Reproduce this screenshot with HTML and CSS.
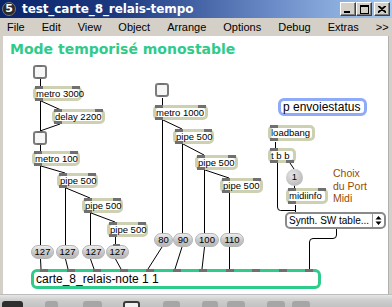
FILE: index.html
```html
<!DOCTYPE html>
<html>
<head>
<meta charset="utf-8">
<link rel="stylesheet" href="styles.css">
</head>
<body>
<div class="window">
  <div class="titlebar">
    <div class="appicon">5</div>
    <div class="title">test_carte_8_relais-tempo</div>
    <div class="winbtns">
      <div class="wbtn"><svg width="8" height="7" viewBox="0 0 8 7"><rect x="0" y="5" width="6" height="2" fill="#000"/></svg></div>
      <div class="wbtn"><svg width="9" height="9" viewBox="0 0 9 9"><rect x="0.5" y="0.5" width="8" height="8" fill="none" stroke="#000"/><rect x="0" y="0" width="9" height="2" fill="#000"/></svg></div>
      <div class="wbtn close"><svg width="8" height="7" viewBox="0 0 8 7"><path d="M0 0 L8 7 M8 0 L0 7 M1 0 L8 6 M7 0 L0 6" stroke="#000" stroke-width="1.2"/></svg></div>
    </div>
  </div>
  <div class="menubar">
    <span>File</span><span>Edit</span><span>View</span><span>Object</span><span>Arrange</span><span>Options</span><span>Debug</span><span>Extras</span><span>&gt;&gt;</span>
  </div>
  <div class="main">
    <div class="side-l"></div>
    <div class="patch">
      <svg class="cords" width="385" height="258" viewBox="3 36 385 258">
        <g stroke="#000" stroke-width="1" fill="none">
          <path d="M40.5 79 V86"/>
          <path d="M40.5 101 V131"/>
          <path d="M41 101 L61 110"/>
          <path d="M60 124 L40 131"/>
          <path d="M40.5 145 V151"/>
          <path d="M40.5 166 V245"/>
          <path d="M41 166 L65 173"/>
          <path d="M65.5 188 V245"/>
          <path d="M66 188 L90 198"/>
          <path d="M90.5 213 V245"/>
          <path d="M91 213 L115 222"/>
          <path d="M115.5 237 V245"/>
          <path d="M40.5 259 L41 269"/>
          <path d="M65.5 259 L68 269"/>
          <path d="M90.5 259 L94 269"/>
          <path d="M115.5 259 L121 269"/>
          <path d="M162.5 98 V105"/>
          <path d="M162.5 120 V234"/>
          <path d="M162 247 L148 269"/>
          <path d="M163 120 L182 129"/>
          <path d="M182.5 144 V234"/>
          <path d="M182 247 L175 269"/>
          <path d="M183 144 L204 155"/>
          <path d="M204.5 170 V234"/>
          <path d="M204.5 247 L202 269"/>
          <path d="M205 170 L229 178"/>
          <path d="M229.5 193 V234"/>
          <path d="M229.5 247 V269"/>
          <path d="M275.5 142 V148"/>
          <path d="M277.5 163 V207 Q277.5 210.5 280.5 210.5 H295.5 V212"/>
          <path d="M290 163 L294 169"/>
          <path d="M294.5 185 V188"/>
          <path d="M295.5 205 V212"/>
          <path d="M336.5 228 V235 Q336.5 238.5 333 238.5 H313 Q309.5 238.5 309.5 242 V269"/>
        </g>
      </svg>

      <div class="heading">Mode temporisé monostable</div>

      <div class="tog t1"><i class="ti"></i><i class="to"></i></div>
      <div class="obj metro3000">metro 3000<i class="il"></i><i class="ir"></i><i class="ol"></i></div>
      <div class="obj delay">delay 2200<i class="il"></i><i class="ir"></i><i class="ol"></i></div>
      <div class="tog t2"><i class="ti"></i><i class="to"></i></div>
      <div class="obj metro100">metro 100<i class="il"></i><i class="ir"></i><i class="ol"></i></div>
      <div class="obj pipe p1">pipe 500<i class="il"></i><i class="ir"></i><i class="ol"></i></div>
      <div class="obj pipe p2">pipe 500<i class="il"></i><i class="ir"></i><i class="ol"></i></div>
      <div class="obj pipe p3">pipe 500<i class="il"></i><i class="ir"></i><i class="ol"></i></div>

      <div class="num n1">127</div>
      <div class="num n2">127</div>
      <div class="num n3">127</div>
      <div class="num n4">127<i class="nt"></i></div>

      <div class="tog t3"><i class="ti"></i><i class="to"></i></div>
      <div class="obj metro1000">metro 1000<i class="il"></i><i class="ir"></i><i class="ol"></i></div>
      <div class="obj pipe pa">pipe 500<i class="il"></i><i class="ir"></i><i class="ol"></i></div>
      <div class="obj pipe pb">pipe 500<i class="il"></i><i class="ir"></i><i class="ol"></i></div>
      <div class="obj pipe pc">pipe 500<i class="il"></i><i class="ir"></i><i class="ol"></i></div>

      <div class="num n80">80</div>
      <div class="num n90">90</div>
      <div class="num n100">100</div>
      <div class="num n110">110</div>

      <div class="sub">p envoiestatus</div>
      <div class="obj loadbang">loadbang<i class="il"></i><i class="ol"></i></div>
      <div class="obj tbb">t b b<i class="il"></i><i class="ol"></i><i class="or"></i></div>
      <div class="msg">1</div>
      <div class="obj midiinfo">midiinfo<i class="il"></i><i class="ir"></i><i class="ol"></i></div>
      <div class="comment">Choix<br>du Port<br>Midi</div>
      <div class="umenu"><span class="umtext">Synth. SW table...</span><span class="umarrows"><svg width="7" height="11" viewBox="0 0 7 11"><path d="M3.5 1 L6.5 4.5 H0.5 Z M3.5 10 L6.5 6.5 H0.5 Z" fill="#000"/></svg></span></div>

      <div class="carte">carte_8_relais-note 1 1
        <div class="inlets"><i></i><i></i><i></i><i></i><i></i><i></i><i></i><i></i><i></i><i></i><i></i></div>
      </div>
    </div>
    <div class="side-r"></div>
  </div>
  <div class="toolbar">
    <div class="tb dark"></div>
    <div class="tb g1"></div>
    <div class="tb g2"></div>
    <div class="tb chk"></div>
    <div class="tb g3"></div>
    <div class="tb g4"></div>
    <div class="tb g5"></div>
    <div class="tb g6"></div>
    <div class="tb g7"></div>
  </div>
</div>
</body>
</html>
```

FILE: styles.css
```css
html, body {
  margin: 0;
  padding: 0;
  background: #d4d0c8;
}
.window {
  width: 392px;
  height: 307px;
  overflow: hidden;
  display: flex;
  flex-direction: column;
  font-family: "Liberation Sans", Arial, sans-serif;
}
.titlebar {
  height: 18px;
  flex: none;
  display: flex;
  align-items: center;
  background: linear-gradient(to right, #0a246a 0%, #1c3a80 30%, #6b8cc8 70%, #a6caf0 100%);
  position: relative;
}
.appicon {
  width: 14px;
  height: 14px;
  margin-left: 2px;
  border-radius: 50%;
  background: #2a2a2a;
  border: 1px solid #777;
  box-sizing: border-box;
  color: #fff;
  font: bold 11px/12px "DejaVu Sans", sans-serif;
  text-align: center;
}
.title {
  margin-left: 6px;
  color: #fff;
  font: bold 12px/18px "DejaVu Sans", sans-serif;
  letter-spacing: -0.1px;
}
.winbtns {
  margin-left: auto;
  margin-right: 2px;
  display: flex;
  gap: 0;
}
.wbtn {
  width: 16px;
  height: 14px;
  box-sizing: border-box;
  background: #d4d0c8;
  border: 1px solid;
  border-color: #fff #404040 #404040 #fff;
  box-shadow: inset -1px -1px #808080;
  display: flex;
  align-items: center;
  justify-content: center;
}
.wbtn.close { margin-left: 2px; }
.menubar {
  height: 18px;
  flex: none;
  display: flex;
  align-items: center;
  gap: 17px;
  padding-left: 7px;
  font: 11px "Liberation Sans", Arial, sans-serif;
  color: #000;
  background: #d4d0c8;
}
.main {
  flex: none;
  height: 258px;
  display: flex;
}
.side-l { width: 3px; background: #d4d0c8; }
.side-r { width: 4px; background: #d4d0c8; border-left: 1px solid #b0b0b0; box-sizing: border-box; }
.patch {
  flex: 1;
  position: relative;
  background: #fff;
  overflow: hidden;
}
.cords { position: absolute; left: 0; top: 0; }
.heading {
  position: absolute;
  left: 7px;
  top: 5px;
  color: #2ecb8a;
  font: bold 14px/17px "DejaVu Sans", sans-serif;
  white-space: nowrap;
}
.obj {
  position: absolute;
  box-sizing: border-box;
  height: 15px;
  border: 3px solid #cdd1b2;
  border-radius: 5px;
  background: #fff;
  font: 9.5px/9px "Liberation Sans", Arial, sans-serif;
  padding-left: 0;
  white-space: nowrap;
  color: #000;
}
.obj i, .tog i {
  position: absolute;
  width: 8px;
  height: 3px;
  background: #707070;
}
.obj .il { left: -1px; top: -3px; }
.obj .ir { right: -1px; top: -3px; }
.obj .ol { left: -1px; bottom: -3px; }
.obj .or { right: -1px; bottom: -3px; }
.metro3000 { left: 30px; top: 50px; width: 49px; }
.delay { left: 49px; top: 73px; width: 53px; }
.metro100 { left: 29px; top: 115px; width: 48px; }
.pipe { width: 41px; }
.p1 { left: 54px; top: 137px; }
.p2 { left: 79px; top: 162px; }
.p3 { left: 104px; top: 186px; }
.metro1000 { left: 150px; top: 69px; width: 55px; }
.pa { left: 170px; top: 93px; }
.pb { left: 192px; top: 119px; width: 43px; }
.pc { left: 217px; top: 142px; width: 43px; }
.loadbang { left: 265px; top: 89px; width: 47px; height: 16px; }
.tbb { left: 265px; top: 112px; width: 28px; }
.midiinfo { left: 283px; top: 152px; width: 42px; height: 16px; }
.tog {
  position: absolute;
  box-sizing: border-box;
  width: 14px;
  height: 14px;
  border: 2px solid #7c7c7c;
  border-radius: 3px;
  background: #f6f6f6;
}
.tog .ti { left: 2px; top: -2px; width: 5px; height: 2px; }
.tog .to { left: 2px; bottom: -2px; width: 5px; height: 2px; }
.t1 { left: 30px; top: 29px; }
.t2 { left: 30px; top: 95px; }
.t3 { left: 152px; top: 47px; }
.num {
  position: absolute;
  box-sizing: border-box;
  height: 14px;
  border-radius: 7px;
  border: 1px solid #b4b4b4;
  background: linear-gradient(#ececec, #c4c4c4 60%, #b8b8b8);
  font: 9.5px/12px "Liberation Sans", Arial, sans-serif;
  text-align: center;
  color: #000;
}
.num .nt { position: absolute; left: 6px; top: -2px; width: 7px; height: 2px; background: #707070; }
.n1 { left: 28px; top: 209px; width: 23px; }
.n2 { left: 53px; top: 209px; width: 23px; }
.n3 { left: 79px; top: 209px; width: 23px; }
.n4 { left: 103px; top: 209px; width: 23px; }
.n80 { left: 151px; top: 197px; width: 19px; }
.n90 { left: 170px; top: 197px; width: 20px; }
.n100 { left: 192px; top: 197px; width: 24px; }
.n110 { left: 217px; top: 197px; width: 24px; }
.sub {
  position: absolute;
  left: 275px;
  top: 62px;
  width: 89px;
  height: 18px;
  box-sizing: border-box;
  border: 3px solid #8eaaf8;
  border-radius: 6px;
  background: #fff;
  font: 12px/12px "Liberation Sans", Arial, sans-serif;
  padding-left: 2px;
  white-space: nowrap;
}
.msg {
  position: absolute;
  left: 283px;
  top: 133px;
  width: 17px;
  height: 17px;
  border-radius: 50%;
  background: radial-gradient(circle at 40% 35%, #e8e8e8, #bcbcbc 70%, #a8a8a8);
  font: 9.5px/16px "Liberation Sans", Arial, sans-serif;
  text-align: center;
}
.comment {
  position: absolute;
  left: 330px;
  top: 131px;
  color: #9a4a00;
  font: 10.5px/12.5px "Liberation Sans", Arial, sans-serif;
}
.umenu {
  position: absolute;
  left: 282px;
  top: 176px;
  width: 101px;
  height: 17px;
  box-sizing: border-box;
  border: 2px solid #8a8a8a;
  border-radius: 5px;
  background: #fff;
  display: flex;
  align-items: center;
  font: 10px/13px "Liberation Sans", Arial, sans-serif;
}
.umtext { flex: 1; padding-left: 2px; white-space: nowrap; overflow: hidden; }
.umarrows {
  width: 11px;
  height: 100%;
  border-left: 1px solid #999;
  display: flex;
  align-items: center;
  justify-content: center;
}
.carte {
  position: absolute;
  left: 28px;
  top: 233px;
  width: 290px;
  height: 20px;
  box-sizing: border-box;
  border: 3px solid #2ecb8a;
  border-radius: 6px;
  background: #fff;
  font: 12px/14px "Liberation Sans", Arial, sans-serif;
  padding-left: 2px;
  white-space: nowrap;
}
.carte .inlets {
  position: absolute;
  left: 6px;
  top: -3px;
  width: 273px;
  display: flex;
  justify-content: space-between;
}
.carte .inlets i {
  width: 8px;
  height: 3px;
  background: #707070;
}
.toolbar {
  flex: 1;
  position: relative;
  background: linear-gradient(#e6e6e6, #cfcfcf 40%, #c2c2c2);
  border-top: 1px solid #bdbdbd;
}
.tb {
  position: absolute;
  top: 6px;
  height: 14px;
  border-radius: 3px;
  background: #a6a6a6;
}
.tb.dark { left: 2px; width: 21px; background: #2e2e2e; }
.tb.g1 { left: 45px; width: 13px; }
.tb.g2 { left: 83px; width: 19px; }
.tb.chk { left: 123px; width: 17px; background: #f0f0f0; border: 2px solid #3a3a3a; box-sizing: border-box; }
.tb.g3 { left: 163px; width: 17px; }
.tb.g4 { left: 202px; width: 16px; }
.tb.g5 { left: 227px; width: 18px; }
.tb.g6 { left: 267px; width: 18px; }
.tb.g7 { left: 292px; width: 18px; }
```
